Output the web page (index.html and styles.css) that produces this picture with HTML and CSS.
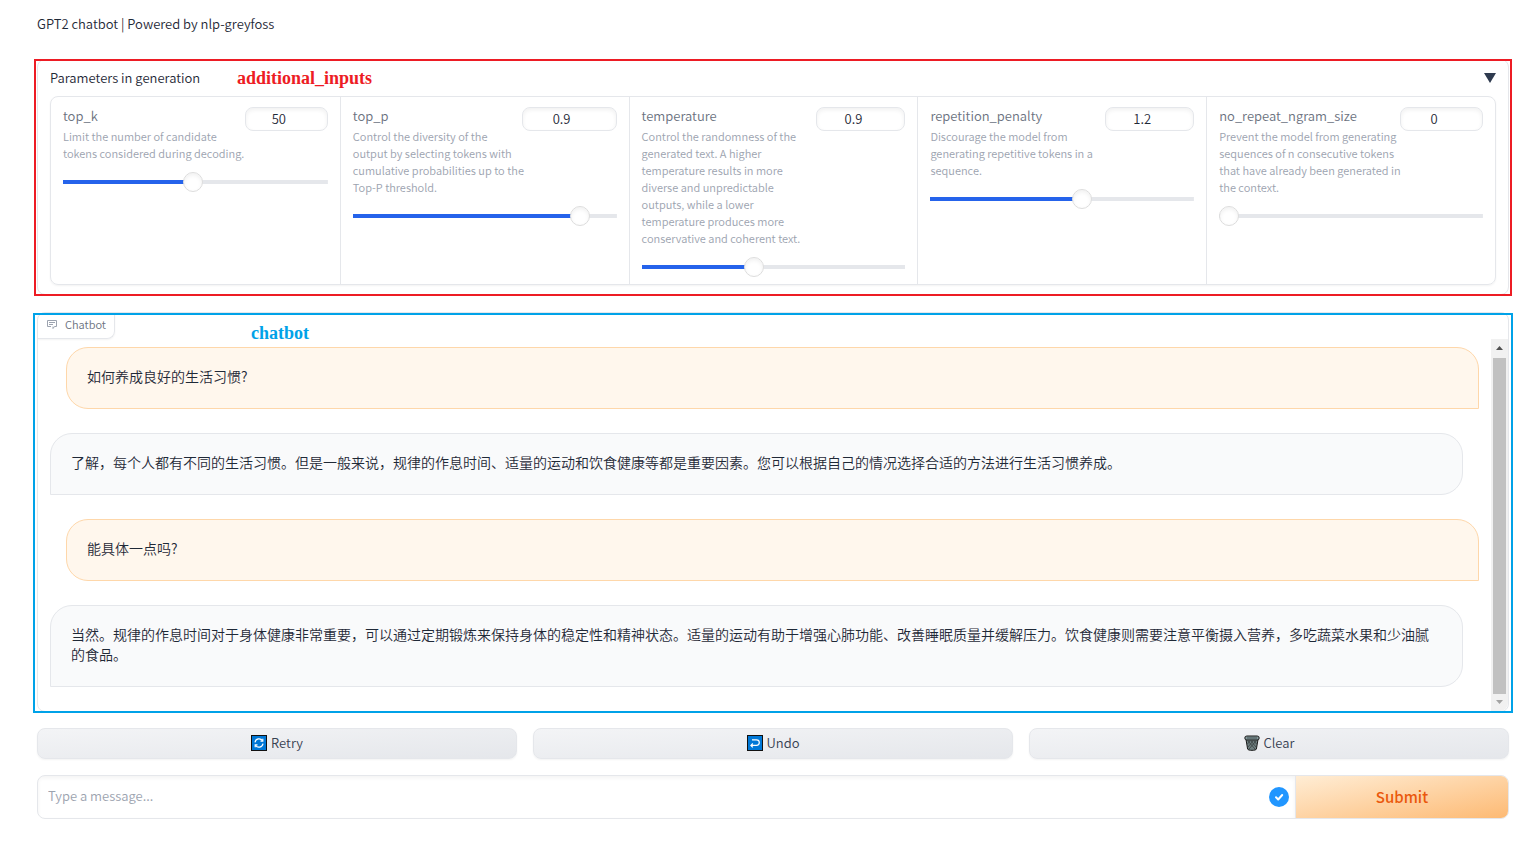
FILE: index.html
```
<!DOCTYPE html>
<html lang="en">
<head>
<meta charset="utf-8">
<title>GPT2 chatbot</title>
<link rel="stylesheet" href="styles.css">
</head>
<body>
<main class="app">
  <p class="intro">GPT2 chatbot | Powered by nlp-greyfoss</p>

  <section class="block accordion">
    <button class="accordion-title" type="button" aria-expanded="true">
      <span>Parameters in generation</span>
      <svg class="caret" viewBox="0 0 12 10" aria-hidden="true"><path d="M0 0h12L6 10z"/></svg>
    </button>
    <div class="params">
      <div class="param">
        <div class="param-head">
          <div class="param-text">
            <label for="top-k">top_k</label>
            <p>Limit the number of candidate tokens considered during decoding.</p>
          </div>
          <input class="number narrow" id="top-k" type="number" value="50">
        </div>
        <input class="slider" type="range" min="0" max="100" value="49" aria-label="top_k" style="--fill:49%">
      </div>
      <div class="param">
        <div class="param-head">
          <div class="param-text">
            <label for="top-p">top_p</label>
            <p>Control the diversity of the<br>output by selecting tokens with cumulative probabilities up to the Top-P threshold.</p>
          </div>
          <input class="number wide" id="top-p" type="number" step="0.1" value="0.9">
        </div>
        <input class="slider" type="range" min="0" max="100" value="89" aria-label="top_p" style="--fill:86%">
      </div>
      <div class="param">
        <div class="param-head">
          <div class="param-text">
            <label for="temperature">temperature</label>
            <p class="tight">Control the randomness of the generated text. A higher temperature results in more diverse and unpredictable outputs, while a lower temperature produces more conservative and coherent text.</p>
          </div>
          <input class="number" id="temperature" type="number" step="0.1" value="0.9">
        </div>
        <input class="slider" type="range" min="0" max="100" value="42" aria-label="temperature" style="--fill:42%">
      </div>
      <div class="param">
        <div class="param-head">
          <div class="param-text">
            <label for="penalty">repetition_penalty</label>
            <p>Discourage the model from generating repetitive tokens in a sequence.</p>
          </div>
          <input class="number" id="penalty" type="number" step="0.1" value="1.2">
        </div>
        <input class="slider" type="range" min="0" max="100" value="58" aria-label="repetition_penalty" style="--fill:57%">
      </div>
      <div class="param">
        <div class="param-head">
          <div class="param-text">
            <label for="ngram">no_repeat_ngram_size</label>
            <p>Prevent the model from generating sequences of n consecutive tokens that have already been generated in the context.</p>
          </div>
          <input class="number narrow" id="ngram" type="number" value="0">
        </div>
        <input class="slider" type="range" min="0" max="100" value="0" aria-label="no_repeat_ngram_size" style="--fill:0%">
      </div>
    </div>
    <div class="outline outline-red"></div>
    <span class="note note-red">additional_inputs</span>
  </section>

  <section class="block chat">
    <div class="chat-label">
      <svg viewBox="0 0 12 12" aria-hidden="true"><path d="M1.500 2.500h9v6H8.500L7 10.500V8.500M5 8.500H1.500v-6M3 4.500h6M3 6.500h4"/></svg>
      <span>Chatbot</span>
    </div>
    <div class="chat-body">
      <div class="messages" lang="zh-CN">
        <div class="message user">如何养成良好的生活习惯?</div>
        <div class="message bot">了解，每个人都有不同的生活习惯。但是一般来说，规律的作息时间、适量的运动和饮食健康等都是重要因素。您可以根据自己的情况选择合适的方法进行生活习惯养成。</div>
        <div class="message user">能具体一点吗?</div>
        <div class="message bot">当然。规律的作息时间对于身体健康非常重要，可以通过定期锻炼来保持身体的稳定性和精神状态。适量的运动有助于增强心肺功能、改善睡眠质量并缓解压力。饮食健康则需要注意平衡摄入营养，多吃蔬菜水果和少油腻的食品。</div>
      </div>
      <div class="scrollbar" aria-hidden="true">
        <svg viewBox="0 0 17 17"><path fill="#505050" d="M5 11h7L8.500 7z"/></svg>
        <div class="thumb"></div>
        <svg viewBox="0 0 17 17"><path fill="#a3a3a3" d="M5 6h7L8.500 10z"/></svg>
      </div>
    </div>
    <div class="outline outline-blue"></div>
    <span class="note note-blue">chatbot</span>
  </section>

  <div class="actions">
    <button class="action" type="button">
      <svg viewBox="0 0 16 16" aria-hidden="true"><path fill="#111" d="M0 0h16v16H0z"/><path fill="#0078d7" d="M1 1h14v14H1z"/><g fill="none" stroke="#fff" stroke-width="1.200"><path d="M4 7.300a4.100 4.100 0 0 1 7.500-1.600M12 8.700a4.100 4.100 0 0 1-7.500 1.600"/><path d="M11.800 3.800v2.300H9.500M4.200 12.200V9.900h2.300"/></g></svg>
      Retry
    </button>
    <button class="action" type="button">
      <svg viewBox="0 0 16 16" aria-hidden="true"><path fill="#111" d="M0 0h16v16H0z"/><path fill="#0078d7" d="M1 1h14v14H1z"/><path fill="none" stroke="#fff" stroke-width="1.200" d="M5 4.800h4.500a2.800 2.800 0 0 1 0 5.600H4M5.800 8.500 3.900 10.400l1.900 1.900"/></svg>
      Undo
    </button>
    <button class="action" type="button">
      <svg viewBox="0 0 16 16" aria-hidden="true"><path fill="#6f7f80" stroke="#1b1b1b" d="M2 4.500 3.600 14c.2 1.800 8.600 1.800 8.800 0L14 4.500z"/><path stroke="#303838" stroke-width=".7" fill="none" d="m4 6 7 8M7 6l5 6M10 6l2.500 3M12 6l-7 8M9 6l-5 6M6 6 3.500 9"/><rect x=".8" y="1" width="14.400" height="4" rx="2" fill="#84989a" stroke="#1b1b1b"/><path stroke="#465456" d="M3 3h10"/></svg>
      Clear
    </button>
  </div>

  <form class="composer">
    <div class="field">
      <input type="text" placeholder="Type a message..." aria-label="Message">
      <svg class="check" viewBox="0 0 20 20" aria-hidden="true"><circle cx="10" cy="10" r="10" fill="#2196ff"/><path fill="none" stroke="#fff" stroke-width="2" stroke-linecap="round" stroke-linejoin="round" d="m7 10.300 2.200 2.200L13.200 8"/></svg>
    </div>
    <button class="submit" type="button">Submit</button>
  </form>
</main>
</body>
</html>
```
FILE: styles.css
```
* { box-sizing: border-box; }
body {
  margin: 0;
  background: #fff;
  color: #1f2937;
  font: 350 13px/20px "Noto Sans CJK SC", sans-serif;
}
p { margin: 0; }
button, input { font: inherit; color: inherit; }
.app { padding: 14px 27px 0 37px; }
.intro { margin-bottom: 25px; }
.block {
  position: relative;
  border: 1px solid #e5e7eb;
  border-radius: 8px;
  margin-bottom: 16px;
}
.accordion { padding: 8px 12px 9px; margin-bottom: 17px; }
.accordion-title {
  display: flex;
  justify-content: space-between;
  align-items: center;
  width: 100%;
  padding: 0;
  border: 0;
  background: none;
  margin-bottom: 8px;
}
.caret { width: 12px; height: 10px; fill: #2f3b4f; }
.params {
  display: grid;
  grid-template-columns: repeat(5, 1fr);
  border: 1px solid #e5e7eb;
  border-radius: 8px;
  box-shadow: 0 1px 2px rgba(0, 0, 0, .05);
}
.param { padding: 10px 12px 7px; }
.param + .param { border-left: 1px solid #e5e7eb; }
.param-head {
  display: flex;
  align-items: flex-start;
  justify-content: space-between;
  margin-bottom: 10px;
}
.param-text { flex: 1; }
.param label {
  display: block;
  margin-bottom: 3px;
  color: #6b7280;
  line-height: 18px;
  white-space: nowrap;
}
.param p { margin-right: -4px; color: #9ca3af; font-size: 11px; line-height: 17px; }
.param .tight { max-width: 168px; }
.number {
  flex: none;
  width: 89px;
  height: 24px;
  padding: 0 4px 2px;
  text-align: center;
  border: 1px solid #e5e7eb;
  border-radius: 8px;
  background: #fff;
  box-shadow: inset 0 2px 4px rgba(0, 0, 0, .06);
}
.narrow { width: 83px; }
.wide { width: 95px; }
.slider {
  appearance: none;
  display: block;
  width: 100%;
  height: 20px;
  margin: 0;
  background: linear-gradient(to right, #2563eb var(--fill), #e5e7eb var(--fill)) center / 100% 4px no-repeat;
}
.slider::-webkit-slider-thumb {
  appearance: none;
  width: 20px;
  height: 20px;
  border: 1px solid #ddd;
  border-radius: 50%;
  background: #fff;
  box-shadow: inset 0 2px 4px rgba(0, 0, 0, .06);
}
.outline { position: absolute; pointer-events: none; }
.outline-red { inset: -1px -4px -2px; border: 2px solid #ed1c24; }
.outline-blue { inset: 0 -5px -2px; border: 2px solid #00a2e8; }
.note {
  position: absolute;
  font: bold 18px/20px "Liberation Serif", serif;
}
.note-red { left: 199px; top: 8px; color: #ed1c24; }
.note-blue { left: 213px; top: 10px; color: #00a2e8; }
.chat-label {
  display: inline-flex;
  align-items: center;
  gap: 7px;
  height: 26px;
  padding: 0 8px 3px;
  border: solid #e5e7eb;
  border-width: 0 1px 1px 0;
  border-radius: 0 0 8px;
  color: #6b7280;
  font-size: 11px;
  box-shadow: 0 1px 2px rgba(0, 0, 0, .05);
  vertical-align: top;
}
.chat-label svg { width: 12px; height: 12px; fill: none; stroke: #9ca3af; }
.chat-body { display: flex; }
.messages {
  flex: 1;
  display: flex;
  flex-direction: column;
  gap: 24px;
  padding: 8px 12px 24px;
}
.message {
  padding: 18px 20px 22px;
  border: 1px solid #e5e7eb;
  font-size: 14px;
  line-height: 20px;
}
.user {
  margin-left: 16px;
  border-color: #fed7aa;
  border-radius: 22px 22px 0 22px;
  background: #fff7ed;
}
.bot {
  margin-right: 16px;
  border-radius: 22px 22px 22px 0;
  background: #f9fafb;
}
.scrollbar {
  display: flex;
  flex-direction: column;
  width: 17px;
  background: #f1f1f1;
  border-radius: 0 0 8px;
}
.scrollbar svg { width: 17px; height: 17px; }
.thumb { flex: 1; margin: 2px 2px 0; background: #c1c1c1; }
.actions { display: grid; grid-template-columns: repeat(3, 1fr); gap: 16px; margin-bottom: 16px; }
.action {
  display: flex;
  align-items: center;
  justify-content: center;
  gap: 4px;
  height: 31px;
  padding: 0 0 2px;
  border: 1px solid #e5e7eb;
  border-radius: 8px;
  background: linear-gradient(to bottom right, #f3f4f6, #e5e7eb);
  color: #374151;
  box-shadow: 0 1px 2px rgba(0, 0, 0, .05);
}
.action svg { width: 16px; height: 16px; }
.composer {
  display: flex;
  height: 44px;
  border: 1px solid #e5e7eb;
  border-radius: 8px;
  overflow: hidden;
}
.field {
  flex: 1;
  display: flex;
  align-items: center;
  padding: 0 6px 0 10px;
  box-shadow: inset 0 2px 4px rgba(0, 0, 0, .05);
}
.field input { flex: 1; padding: 0 0 2px; border: 0; outline: 0; background: none; }
.field input::placeholder { color: #9ca3af; opacity: 1; }
.check { width: 20px; height: 20px; }
.submit {
  width: 213px;
  border: 0;
  border-left: 1px solid #e5e7eb;
  background: linear-gradient(to bottom right, #ffedd5, #fdba74);
  color: #ea580c;
  font-size: 15px;
  font-weight: 500;
}
```
